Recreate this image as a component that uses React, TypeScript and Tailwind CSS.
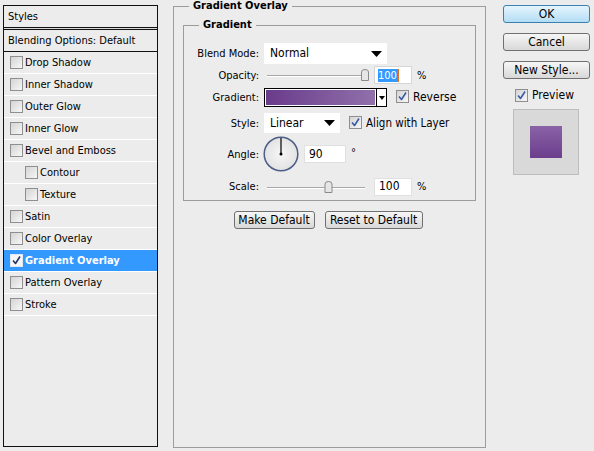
import React from 'react';

const font = "font-['DejaVu_Sans_Condensed','Liberation_Sans',sans-serif]";

function Checkbox({ checked = false, onBlue = false }: { checked?: boolean; onBlue?: boolean }) {
  return (
    <span
      className={`relative inline-flex h-[13px] w-[13px] shrink-0 items-center justify-center border ${
        onBlue ? 'border-[#dfe9f5] bg-[#f6f6f6]' : 'border-[#8f8f8f] bg-gradient-to-br from-[#d4d4d4] to-[#f7f7f7]'
      }`}
    >
      {checked && (
        <svg width="11" height="11" viewBox="0 0 11 11">
          <path
            d="M2 5.5 L4.5 8.5 L9 1.5"
            fill="none"
            stroke={onBlue ? '#2a3565' : '#3a5aa6'}
            strokeWidth="1.6"
            strokeLinejoin="round"
          />
        </svg>
      )}
    </span>
  );
}

function Arrow() {
  return (
    <svg width="11" height="6" viewBox="0 0 11 6">
      <path d="M0 0 H11 L5.5 6 Z" fill="#000" />
    </svg>
  );
}

function Slider({ pos }: { pos: number }) {
  return (
    <svg width="110" height="16" viewBox="0 0 110 16" className="shrink-0">
      <line x1="3" y1="8.5" x2="101" y2="8.5" stroke="#a8a8a8" />
      <line x1="3" y1="9.5" x2="101" y2="9.5" stroke="#ffffff" />
      <path
        d={`M${pos - 3.5} 5 Q${pos - 3.5} 2.5 ${pos} 2.5 Q${pos + 3.5} 2.5 ${pos + 3.5} 5 V13.5 H${pos - 3.5} Z`}
        fill="#e6e6e6"
        stroke="#8a8a8a"
      />
    </svg>
  );
}

const layers = [
  { label: 'Drop Shadow' },
  { label: 'Inner Shadow' },
  { label: 'Outer Glow' },
  { label: 'Inner Glow' },
  { label: 'Bevel and Emboss' },
  { label: 'Contour', sub: true },
  { label: 'Texture', sub: true },
  { label: 'Satin' },
  { label: 'Color Overlay' },
  { label: 'Gradient Overlay', active: true },
  { label: 'Pattern Overlay' },
  { label: 'Stroke' },
];

function Row({ label, height, children, className = '' }: { label: string; height: number; children: React.ReactNode; className?: string }) {
  return (
    <div className={`flex items-center ${className}`} style={{ height }}>
      <div className="w-[75px] shrink-0 text-right">{label}</div>
      <div className="ml-[5px] flex items-center">{children}</div>
    </div>
  );
}

export default function App() {
  return (
    <div className={`flex h-[451px] w-[594px] bg-[#ececec] text-[11px] leading-[13px] text-black ${font}`}>
      {/* Styles list */}
      <div className="ml-[3px] mt-[5px] flex h-[442px] w-[155px] shrink-0 flex-col border border-[#111]">
        <div className="flex h-[22px] items-center border-b border-[#111] pl-[4px]">Styles</div>
        <div className="h-[1px] bg-[#d8d8d8]" />
        <div className="flex h-[23px] items-center border-y border-[#111] pl-[4px]">Blending Options: Default</div>
        {layers.map((l) => (
          <div
            key={l.label}
            className={`flex h-[22px] items-center gap-[2px] border-b border-white ${l.sub ? 'pl-[21px]' : 'pl-[6px]'} ${
              l.active ? 'bg-[#3399ff] font-bold text-white' : ''
            }`}
          >
            <Checkbox checked={l.active} onBlue={l.active} />
            <span>{l.label}</span>
          </div>
        ))}
      </div>

      {/* Gradient Overlay settings */}
      <fieldset className="ml-[15px] h-[448px] w-[313px] shrink-0 border border-[#9c9c9c]">
        <legend className="ml-[15px] px-[4px] text-[11px] font-bold leading-[12px]">Gradient Overlay</legend>
        <fieldset className="mx-[9px] mt-[6px] h-[183px] border border-[#9c9c9c]">
          <legend className="ml-[15px] px-[4px] text-[11px] font-bold leading-[14px]">Gradient</legend>
          <div className="mt-[11px] flex flex-col">
            <Row label="Blend Mode:" height={21}>
              <div className="flex h-[21px] w-[123px] items-center justify-between bg-white pl-[6px] pr-[5px] text-[12px]">
                <span>Normal</span>
                <Arrow />
              </div>
            </Row>
            <Row label="Opacity:" height={18} className="mt-[2px]">
              <Slider pos={101} />
              <div className="flex h-[18px] w-[38px] items-center border border-[#d6d6d6] bg-white pl-[3px]">
                <span className="bg-[#3399ff] text-white">100</span>
                <span className="h-[13px] w-[2px] bg-[#e07020]" />
              </div>
              <span className="ml-[5px]">%</span>
            </Row>
            <Row label="Gradient:" height={19} className="mt-[4px]">
              <div className="flex h-[19px] w-[123px] border border-black bg-white">
                <div className="m-[1px] flex-1 bg-gradient-to-r from-[#6a3b8b] to-[#9070aa]" />
                <div className="flex w-[10px] items-center justify-center border-l border-black">
                  <svg width="6" height="4" viewBox="0 0 6 4">
                    <path d="M0 0 H6 L3 4 Z" fill="#000" />
                  </svg>
                </div>
              </div>
              <span className="ml-[9px]">
                <Checkbox checked />
              </span>
              <span className="ml-[4px] text-[12px]">Reverse</span>
            </Row>
            <Row label="Style:" height={20} className="mt-[6px]">
              <div className="flex h-[20px] w-[76px] items-center justify-between bg-white pl-[6px] pr-[5px] text-[12px]">
                <span>Linear</span>
                <Arrow />
              </div>
              <span className="ml-[9px]">
                <Checkbox checked />
              </span>
              <span className="ml-[4px] text-[11.5px]">Align with Layer</span>
            </Row>
            <Row label="Angle:" height={36} className="mt-[3px]">
              <svg width="36" height="36" viewBox="0 0 36 36" className="-ml-[1px]">
                <defs>
                  <radialGradient id="dial" cx="0.5" cy="0.5" r="0.5">
                    <stop offset="0" stopColor="#f7f7f7" />
                    <stop offset="1" stopColor="#e2e2e2" />
                  </radialGradient>
                </defs>
                <circle cx="18" cy="18" r="16.8" fill="url(#dial)" stroke="#4d5e86" strokeWidth="1.5" />
                <line x1="18" y1="18" x2="18" y2="2" stroke="#000" strokeWidth="1.2" />
                <circle cx="18" cy="18" r="1.5" fill="#000" />
              </svg>
              <div className="ml-[5px] flex h-[18px] w-[42px] items-center border border-[#e0e0e0] bg-white pl-[4px] text-[12px]">90</div>
              <span className="ml-[5px] -mt-[4px]">°</span>
            </Row>
            <Row label="Scale:" height={17} className="mt-[6px]">
              <Slider pos={64.5} />
              <div className="flex h-[18px] w-[38px] items-center border border-[#e0e0e0] bg-white pl-[4px] text-[12px]">100</div>
              <span className="ml-[5px]">%</span>
            </Row>
          </div>
        </fieldset>
        <div className="mt-[10px] flex justify-center gap-[10px] pr-[3px]">
          <button className="h-[18px] w-[81px] rounded-[3px] border border-[#707070] bg-gradient-to-b from-[#f6f6f6] to-[#d8d8d8] text-[12px] leading-[16px]">
            Make Default
          </button>
          <button className="h-[18px] w-[98px] rounded-[3px] border border-[#707070] bg-gradient-to-b from-[#f6f6f6] to-[#d8d8d8] text-[12px] leading-[16px]">
            Reset to Default
          </button>
        </div>
      </fieldset>

      {/* Dialog actions and preview */}
      <div className="ml-[17px] mt-[5px] flex w-[87px] shrink-0 flex-col">
        <button className="h-[18px] rounded-[3px] border border-[#3c7fb1] bg-gradient-to-b from-[#e5f5fd] to-[#b3ddf5] text-[12px] leading-[16px]">
          OK
        </button>
        <button className="mt-[10px] h-[18px] rounded-[3px] border border-[#707070] bg-gradient-to-b from-[#f6f6f6] to-[#d8d8d8] text-[12px] leading-[16px]">
          Cancel
        </button>
        <button className="mt-[10px] h-[18px] rounded-[3px] border border-[#707070] bg-gradient-to-b from-[#f6f6f6] to-[#d8d8d8] text-[12px] leading-[16px]">
          New Style...
        </button>
        <div className="ml-[12px] mt-[8px] flex h-[16px] items-center gap-[4px] text-[12px]">
          <Checkbox checked />
          <span>Preview</span>
        </div>
        <div className="ml-[10px] mt-[6px] flex h-[66px] w-[66px] items-center justify-center border border-[#bdbdbd] bg-[#d9d9d9]">
          <div className="h-[32px] w-[32px] bg-gradient-to-b from-[#8a62a6] to-[#6c3e8d]" />
        </div>
      </div>
    </div>
  );
}
